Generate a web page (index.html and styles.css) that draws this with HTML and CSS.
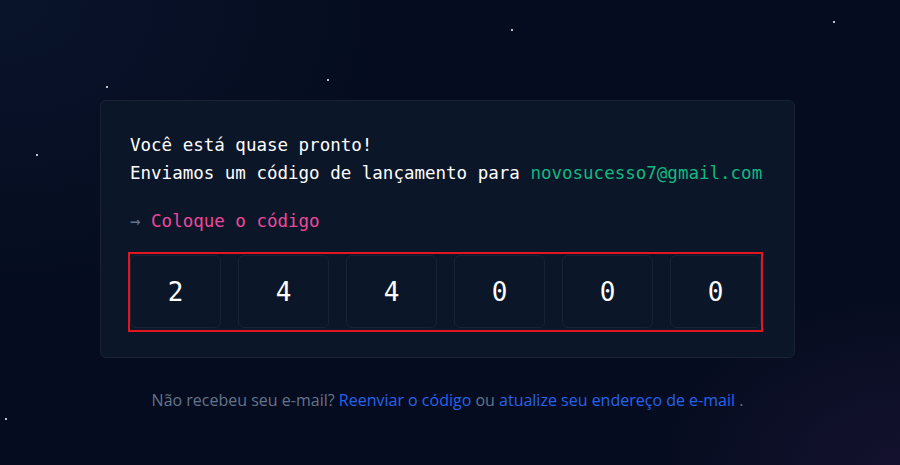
FILE: index.html
```html
<!DOCTYPE html>
<html lang="pt-BR">
<head>
<meta charset="utf-8">
<title>Código de lançamento</title>
<link rel="stylesheet" href="styles.css">
</head>
<body>
<div class="sky">
  <span class="star" style="left:511px;top:29px"></span>
  <span class="star" style="left:833px;top:21px"></span>
  <span class="star" style="left:327px;top:79px"></span>
  <span class="star" style="left:106px;top:86px"></span>
  <span class="star" style="left:36px;top:154px"></span>
  <span class="star" style="left:5px;top:418px"></span>
</div>
<main class="page">
  <section class="card">
    <p class="line">Você está quase pronto!</p>
    <p class="line">Enviamos um código de lançamento para <span class="email">novosucesso7@gmail.com</span></p>
    <p class="prompt"><span class="arrow">→</span> Coloque o código</p>
    <div class="code">
      <div class="digit">2</div>
      <div class="digit">4</div>
      <div class="digit">4</div>
      <div class="digit">0</div>
      <div class="digit">0</div>
      <div class="digit">0</div>
    </div>
  </section>
  <p class="footer">Não recebeu seu e-mail? <a href="#">Reenviar o código</a> ou <a href="#">atualize seu endereço de e-mail</a> .</p>
</main>
</body>
</html>
```
FILE: styles.css
```css
html, body {
  margin: 0;
  height: 100%;
}
body {
  background:
    radial-gradient(ellipse 260px 180px at 100% 100%, rgba(38, 24, 64, 0.45), rgba(38, 24, 64, 0) 100%),
    radial-gradient(ellipse 400px 300px at 0% 0%, rgba(14, 28, 56, 0.45), rgba(14, 28, 56, 0) 100%),
    #050c1f;
  overflow: hidden;
  position: relative;
}
.sky {
  position: absolute;
  inset: 0;
  pointer-events: none;
}
.star {
  position: absolute;
  width: 2px;
  height: 2px;
  background: #ffffff;
  border-radius: 1px;
}
.page {
  position: relative;
  padding: 100px 0 0 100px;
  width: 695px;
}
.card {
  background: #0c1629;
  border: 1px solid #1a2336;
  border-radius: 6px;
  padding: 30px 29px 27px 29px;
  font-family: "DejaVu Sans Mono", "Liberation Mono", monospace;
  font-size: 17.5px;
  color: #ffffff;
}
.line {
  margin: 0;
  line-height: 28px;
  white-space: nowrap;
}
.email {
  color: #10b981;
}
.prompt {
  margin: 20px 0 19px 0;
  line-height: 28px;
  color: #ec4899;
}
.arrow {
  color: #64748b;
}
.code {
  display: grid;
  grid-template-columns: repeat(6, 1fr);
  gap: 17px;
  width: 631px;
  padding: 1px 0 2px 0;
  outline: 2px solid #e3161f;
}
.digit {
  box-sizing: border-box;
  height: 73px;
  border: 1px solid #1a2336;
  border-radius: 6px;
  background: #0c1629;
  display: flex;
  align-items: center;
  justify-content: center;
  font-size: 26px;
  color: #ffffff;
}
.footer {
  margin: 31px 0 0 0;
  text-align: center;
  font-family: "Open Sans", "Noto Sans", sans-serif;
  font-size: 16px;
  color: #64748b;
}
.footer a {
  color: #2563eb;
  text-decoration: none;
}
```
